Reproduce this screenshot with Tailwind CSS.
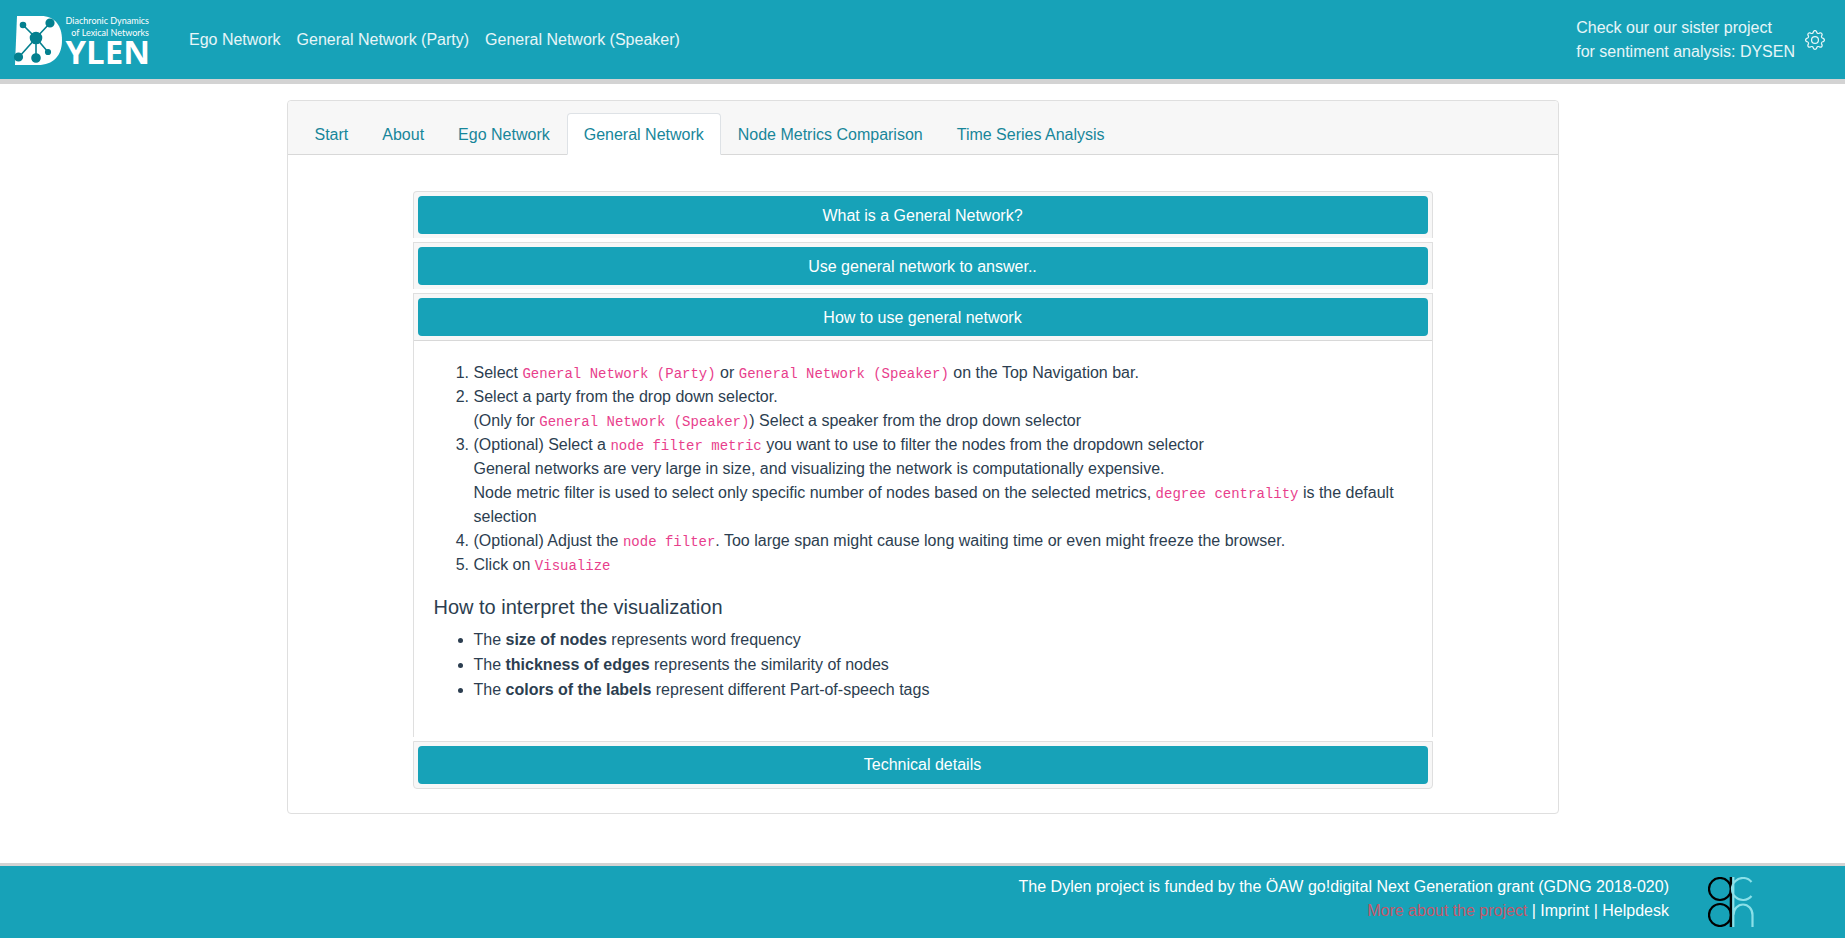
<!DOCTYPE html>
<html lang="en">
<head>
<meta charset="utf-8">
<meta name="viewport" content="width=device-width, initial-scale=1">
<title>DYLEN – Diachronic Dynamics of Lexical Networks</title>
<script src="https://cdn.jsdelivr.net/npm/@tailwindcss/browser@4"></script>
</head>
<body class="flex min-h-screen flex-col bg-white font-['Liberation_Sans',Arial,sans-serif] text-base text-[#2c3e50]">

<header class="flex items-center border-b-5 border-[#d3d3d3] bg-[#17a2b8] py-3 pr-5 pl-[14px] text-white/90">
  <a href="#" aria-label="DYLEN home" class="mr-[38px] shrink-0">
    <svg class="h-[55px] w-[137px] overflow-visible" viewBox="0 -4 137 55" role="img" aria-label="Diachronic Dynamics of Lexical Networks, DYLEN">
      <path d="M3 0H27C41 0 48 10 48 24C48 40 39 49 24 49H1Z" fill="#fff"/>
      <g stroke="#04808f" stroke-width="1.6" fill="#04808f">
        <path d="M22 22L9 9M22 22L36 7M22 22L5 41M22 22L22 42M22 22L34 36" fill="none"/>
        <circle cx="9" cy="9" r="2.500"/><circle cx="36" cy="7" r="3.800"/><circle cx="22" cy="22" r="5.500"/><circle cx="4.500" cy="41" r="3.800"/><circle cx="22" cy="42" r="4"/><circle cx="34" cy="36" r="2.300"/>
      </g>
      <g fill="#fff" text-anchor="end">
        <text x="135" y="8" font-size="9" font-family="Lato,sans-serif">Diachronic Dynamics</text>
        <text x="135" y="20" font-size="9" font-family="Lato,sans-serif">of Lexical Networks</text>
        <text x="136" y="48" font-size="33" font-weight="700" font-family="'Open Sans','Noto Sans',sans-serif">YLEN</text>
      </g>
    </svg>
  </a>
  <nav class="flex gap-4" aria-label="Main">
    <a href="#">Ego Network</a>
    <a href="#">General Network (Party)</a>
    <a href="#">General Network (Speaker)</a>
  </nav>
  <a href="#" class="ml-auto">Check our our sister project<br>for sentiment analysis: DYSEN</a>
  <button type="button" aria-label="Settings" class="ml-[10px]">
    <svg class="size-5" viewBox="0 0 16 16" fill="currentColor" aria-hidden="true">
      <path d="M8 4.754a3.246 3.246 0 1 0 0 6.492 3.246 3.246 0 0 0 0-6.492zM5.754 8a2.246 2.246 0 1 1 4.492 0 2.246 2.246 0 0 1-4.492 0z"/>
      <path d="M9.796 1.343c-.527-1.79-3.065-1.79-3.592 0l-.094.319a.873.873 0 0 1-1.255.52l-.292-.16c-1.64-.892-3.433.902-2.54 2.541l.159.292a.873.873 0 0 1-.52 1.255l-.319.094c-1.79.527-1.79 3.065 0 3.592l.319.094a.873.873 0 0 1 .52 1.255l-.16.292c-.892 1.64.901 3.434 2.541 2.54l.292-.159a.873.873 0 0 1 1.255.52l.094.319c.527 1.79 3.065 1.79 3.592 0l.094-.319a.873.873 0 0 1 1.255-.52l.292.16c1.64.893 3.434-.902 2.54-2.541l-.159-.292a.873.873 0 0 1 .52-1.255l.319-.094c1.79-.527 1.79-3.065 0-3.592l-.319-.094a.873.873 0 0 1-.52-1.255l.16-.292c.893-1.64-.902-3.433-2.541-2.54l-.292.159a.873.873 0 0 1-1.255-.52l-.094-.319zm-2.633.283c.246-.835 1.428-.835 1.674 0l.094.319a1.873 1.873 0 0 0 2.693 1.115l.291-.16c.764-.415 1.6.42 1.184 1.185l-.159.292a1.873 1.873 0 0 0 1.116 2.692l.318.094c.835.246.835 1.428 0 1.674l-.319.094a1.873 1.873 0 0 0-1.115 2.693l.16.291c.415.764-.42 1.6-1.185 1.184l-.291-.159a1.873 1.873 0 0 0-2.693 1.116l-.094.318c-.246.835-1.428.835-1.674 0l-.094-.319a1.873 1.873 0 0 0-2.692-1.115l-.292.16c-.764.415-1.6-.42-1.184-1.185l.159-.291A1.873 1.873 0 0 0 1.945 8.93l-.319-.094c-.835-.246-.835-1.428 0-1.674l.319-.094A1.873 1.873 0 0 0 3.06 4.377l-.16-.292c-.415-.764.42-1.6 1.185-1.184l.292.159a1.873 1.873 0 0 0 2.692-1.115l.094-.319z"/>
    </svg>
  </button>
</header>

<main class="px-4 pt-4 pb-12">
  <div class="mx-auto max-w-[1272px] rounded border border-[#dfdfdf]">
    <nav class="flex rounded-t border-b border-[#d8d8d8] bg-[#f7f7f7] px-[10px] pt-3 text-[#17869a]" aria-label="Help sections">
      <a href="#" class="-mb-px border border-transparent px-4 pt-[9px] pb-[7px]">Start</a>
      <a href="#" class="-mb-px border border-transparent px-4 pt-[9px] pb-[7px]">About</a>
      <a href="#" class="-mb-px border border-transparent px-4 pt-[9px] pb-[7px]">Ego Network</a>
      <a href="#" aria-current="page" class="-mb-px rounded-t border border-[#dee2e6] border-b-white bg-white px-4 pt-[9px] pb-[7px]">General Network</a>
      <a href="#" class="-mb-px border border-transparent px-4 pt-[9px] pb-[7px]">Node Metrics Comparison</a>
      <a href="#" class="-mb-px border border-transparent px-4 pt-[9px] pb-[7px]">Time Series Analysis</a>
    </nav>

    <div class="px-5 pt-9 pb-6">
      <div class="mx-auto flex max-w-[1020px] flex-col gap-1">
        <section class="rounded-t border border-b-0 border-[#dfdfdf] bg-[#f7f7f7] p-1">
          <button type="button" aria-expanded="false" class="block w-full rounded bg-[#17a2b8] pt-2 pb-[6px] text-white">What is a General Network?</button>
        </section>
        <section class="border border-b-0 border-[#dfdfdf] bg-[#f7f7f7] p-1">
          <button type="button" aria-expanded="false" class="block w-full rounded bg-[#17a2b8] pt-2 pb-[6px] text-white">Use general network to answer..</button>
        </section>
        <section class="border border-b-0 border-[#dfdfdf]">
          <div class="border-b border-[#d8d8d8] bg-[#f7f7f7] p-1">
            <button type="button" aria-expanded="true" class="block w-full rounded bg-[#17a2b8] pt-2 pb-[6px] text-white">How to use general network</button>
          </div>
          <div class="px-5 pt-5 pb-[35px]">
            <ol class="mb-[18px] list-decimal pl-10">
              <li>Select <code class="font-['Liberation_Mono',monospace] text-sm/5 text-[#e83e8c]">General Network (Party)</code> or <code class="font-['Liberation_Mono',monospace] text-sm/5 text-[#e83e8c]">General Network (Speaker)</code> on the Top Navigation bar.</li>
              <li>Select a party from the drop down selector.<br>(Only for <code class="font-['Liberation_Mono',monospace] text-sm/5 text-[#e83e8c]">General Network (Speaker)</code>) Select a speaker from the drop down selector</li>
              <li>(Optional) Select a <code class="font-['Liberation_Mono',monospace] text-sm/5 text-[#e83e8c]">node filter metric</code> you want to use to filter the nodes from the dropdown selector<br>General networks are very large in size, and visualizing the network is computationally expensive.<br>Node metric filter is used to select only specific number of nodes based on the selected metrics, <code class="font-['Liberation_Mono',monospace] text-sm/5 text-[#e83e8c]">degree centrality</code> is the default selection</li>
              <li>(Optional) Adjust the <code class="font-['Liberation_Mono',monospace] text-sm/5 text-[#e83e8c]">node filter</code>. Too large span might cause long waiting time or even might freeze the browser.</li>
              <li>Click on <code class="font-['Liberation_Mono',monospace] text-sm/5 text-[#e83e8c]">Visualize</code></li>
            </ol>
            <h5 class="mb-[9px] text-xl/6">How to interpret the visualization</h5>
            <ul class="list-disc space-y-px pl-10">
              <li>The <b>size of nodes</b> represents word frequency</li>
              <li>The <b>thickness of edges</b> represents the similarity of nodes</li>
              <li>The <b>colors of the labels</b> represent different Part-of-speech tags</li>
            </ul>
          </div>
        </section>
        <section class="rounded-b border border-[#dfdfdf] bg-[#f7f7f7] p-1">
          <button type="button" aria-expanded="false" class="block w-full rounded bg-[#17a2b8] py-[7px] text-white">Technical details</button>
        </section>
      </div>
    </div>
  </div>
</main>

<footer class="mt-auto flex items-start justify-end gap-[39px] border-t-3 border-[#d3d3d3] bg-[#17a2b8] pt-[9px] pr-[91px] pb-[11px] text-white">
  <p class="text-right">The Dylen project is funded by the ÖAW go!digital Next Generation grant (GDNG 2018-020)<br><a href="#" class="text-[#c4586a]">More about the project</a> | <a href="#">Imprint</a> | <a href="#">Helpdesk</a></p>
  <a href="#" aria-label="ACDH" class="pt-[2px]">
    <svg class="h-[50px] w-[46px]" viewBox="0 0 46 50" fill="none" stroke-width="2.200" aria-hidden="true">
      <g stroke="#000"><circle cx="12" cy="12" r="11"/><circle cx="12" cy="38" r="11"/><path d="M23 0V50" stroke-width="2.600"/></g>
      <g stroke="#8be0e8"><path d="M25.300 0V50M43.500 5A11 11 0 1 0 43.500 19M25.500 38A9.500 10.500 0 0 1 44.500 38V50"/></g>
    </svg>
  </a>
</footer>
</body>
</html>
